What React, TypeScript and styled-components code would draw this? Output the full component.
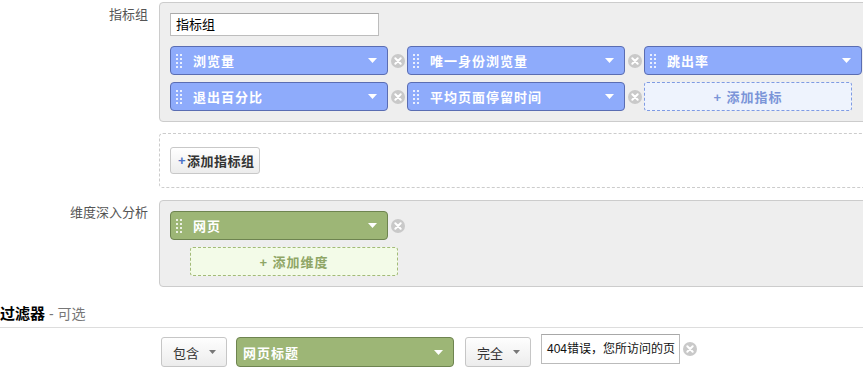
import React from 'react';
import styled, { createGlobalStyle } from 'styled-components';

const Global = createGlobalStyle`
  html, body { margin: 0; padding: 0; background: #fff; overflow: hidden; }
  body {
    font-family: "Liberation Sans", Arial, "Noto Sans CJK SC", sans-serif;
    font-size: 13px;
    color: #333;
  }
  * { box-sizing: border-box; }
`;

const Page = styled.div`
  width: 863px;
  height: 371px;
  overflow: hidden;
  padding-top: 2px;
`;

const Row = styled.div<{ $mb?: number }>`
  display: flex;
  align-items: flex-start;
  margin-bottom: ${(p) => p.$mb ?? 0}px;
`;

const Label = styled.div`
  flex: none;
  width: 148px;
  margin-right: 11px;
  text-align: right;
  color: #555;
  font-size: 13px;
  line-height: 16px;
  padding-top: 5px;
`;

const Panel = styled.div`
  flex: none;
  width: 740px;
  background: #eeeeee;
  border: 1px solid #cccccc;
  border-radius: 4px;
  padding: 10px;
`;

const NameInput = styled.div`
  width: 209px;
  height: 23px;
  background: #fff;
  border: 1px solid #bdbdbd;
  border-top-color: #a9a9a9;
  padding-left: 5px;
  font-size: 13px;
  line-height: 21px;
  color: #000;
  margin-bottom: 10px;
`;

const ChipGrid = styled.div`
  display: grid;
  grid-template-columns: repeat(3, 237px);
  row-gap: 7px;
`;

const Slot = styled.div<{ $indent?: number }>`
  display: flex;
  align-items: center;
  margin-left: ${(p) => p.$indent ?? 0}px;
`;

const Chip = styled.div<{ $tone: 'blue' | 'green'; $width?: number; $height?: number; $pl?: number }>`
  flex: none;
  display: flex;
  align-items: center;
  width: ${(p) => p.$width ?? 218}px;
  height: ${(p) => p.$height ?? 29}px;
  padding: 0 10px 0 ${(p) => p.$pl ?? 5}px;
  border: 1px solid ${(p) => (p.$tone === 'blue' ? '#5a6db2' : '#6e8450')};
  border-radius: 4px;
  background: ${(p) => (p.$tone === 'blue' ? '#8eabfb' : '#9db676')};
  color: #fff;
  font-weight: bold;
  font-size: 13px;
  letter-spacing: 1px;
  white-space: nowrap;
`;

const Handle = styled.span`
  position: relative;
  flex: none;
  width: 6px;
  height: 14px;
  margin-right: 11px;
  &::before {
    content: '';
    position: absolute;
    left: 0;
    top: 0;
    width: 2px;
    height: 2px;
    background: rgba(255, 255, 255, 0.8);
    box-shadow:
      4px 0 rgba(255, 255, 255, 0.8),
      0 4px rgba(255, 255, 255, 0.8),
      4px 4px rgba(255, 255, 255, 0.8),
      0 8px rgba(255, 255, 255, 0.8),
      4px 8px rgba(255, 255, 255, 0.8),
      0 12px rgba(255, 255, 255, 0.8),
      4px 12px rgba(255, 255, 255, 0.8);
  }
`;

const ChipText = styled.span`
  flex: 1;
`;

const Caret = ({ color = '#fff', w = 9, h = 5 }: { color?: string; w?: number; h?: number }) => (
  <svg width={w} height={h} viewBox={`0 0 ${w} ${h}`} style={{ flex: 'none', display: 'block' }}>
    <polygon points={`0,0 ${w},0 ${w / 2},${h}`} fill={color} />
  </svg>
);

const RemoveWrap = styled.span<{ $w?: number }>`
  flex: none;
  width: ${(p) => p.$w ?? 19}px;
  display: flex;
  justify-content: center;
  align-items: center;
`;

const Remove = ({ w }: { w?: number }) => (
  <RemoveWrap $w={w}>
    <svg width="14" height="14" viewBox="0 0 14 14">
      <circle cx="7" cy="7" r="7" fill="#c9c9c9" />
      <path d="M4.3 4.3 L9.7 9.7 M9.7 4.3 L4.3 9.7" stroke="#fff" strokeWidth="2" strokeLinecap="round" />
    </svg>
  </RemoveWrap>
);

const AddBox = styled.div<{ $tone: 'blue' | 'green'; $ml?: number; $mt?: number }>`
  width: 208px;
  height: 29px;
  margin-left: ${(p) => p.$ml ?? 0}px;
  margin-top: ${(p) => p.$mt ?? 0}px;
  display: flex;
  align-items: center;
  justify-content: center;
  border: 1px dashed ${(p) => (p.$tone === 'blue' ? '#7f9be3' : '#a3bb78')};
  border-radius: 3px;
  background: ${(p) => (p.$tone === 'blue' ? '#eef3fd' : '#f3fbe8')};
  color: ${(p) => (p.$tone === 'blue' ? '#7b95d8' : '#8fa666')};
  font-weight: bold;
  font-size: 13px;
  letter-spacing: 1px;
`;

const DashedBox = styled.div`
  flex: none;
  width: 740px;
  border: 1px dashed #cccccc;
  border-radius: 4px;
  padding: 13px 10px;
`;

const GroupButton = styled.div`
  width: 90px;
  height: 27px;
  display: flex;
  align-items: center;
  padding-left: 7px;
  border: 1px solid #c8c8c8;
  border-radius: 3px;
  background: linear-gradient(#ffffff, #ececec);
  color: #333;
  font-weight: bold;
  font-size: 13px;
  letter-spacing: 0.5px;
  white-space: nowrap;
`;

const Plus = styled.span`
  color: #4a72c8;
  margin-right: 1px;
`;

const FilterHeader = styled.div`
  padding-top: 17px;
  padding-bottom: 2px;
  line-height: 20px;
  border-bottom: 1px solid #dddddd;
`;

const FilterTitle = styled.span`
  font-size: 15px;
  font-weight: bold;
  color: #000;
`;

const FilterSub = styled.span`
  font-size: 14px;
  color: #777;
  margin-left: 4px;
`;

const FilterRow = styled.div`
  display: flex;
  align-items: flex-start;
  padding: 6px 0 0 161px;
`;

const SelectButton = styled.div<{ $mr: number }>`
  flex: none;
  width: 66px;
  height: 30px;
  margin-top: 3px;
  margin-right: ${(p) => p.$mr}px;
  display: flex;
  align-items: center;
  justify-content: space-between;
  padding: 0 10px 0 11px;
  border: 1px solid #c6c6c6;
  border-radius: 3px;
  background: linear-gradient(#fefefe, #ececec);
  color: #333;
  font-size: 13px;
`;

const FilterSelectWrap = styled.div`
  margin-top: 3px;
  margin-right: 11px;
`;

const FilterInput = styled.div`
  flex: none;
  width: 139px;
  height: 30px;
  border: 1px solid #bbbbbb;
  border-top-color: #a8a8a8;
  background: #fff;
  padding-left: 5px;
  font-size: 12px;
  line-height: 28px;
  color: #111;
  white-space: nowrap;
  overflow: hidden;
`;

const RemoveCenter = styled.div`
  margin-top: 8px;
  margin-left: 3px;
`;

const metrics = ['浏览量', '唯一身份浏览量', '跳出率', '退出百分比', '平均页面停留时间'];

export default function App() {
  return (
    <Page>
      <Global />
      <Row $mb={11}>
        <Label>指标组</Label>
        <Panel>
          <NameInput>指标组</NameInput>
          <ChipGrid>
            {metrics.map((m) => (
              <Slot key={m}>
                <Chip $tone="blue">
                  <Handle />
                  <ChipText>{m}</ChipText>
                  <Caret />
                </Chip>
                <Remove />
              </Slot>
            ))}
            <Slot>
              <AddBox $tone="blue">+ 添加指标</AddBox>
            </Slot>
          </ChipGrid>
        </Panel>
      </Row>
      <Row $mb={12}>
        <Label />
        <DashedBox>
          <GroupButton>
            <Plus>+</Plus>添加指标组
          </GroupButton>
        </DashedBox>
      </Row>
      <Row>
        <Label>维度深入分析</Label>
        <Panel>
          <Slot>
            <Chip $tone="green">
              <Handle />
              <ChipText>网页</ChipText>
              <Caret />
            </Chip>
            <Remove />
          </Slot>
          <AddBox $tone="green" $ml={20} $mt={7}>
            + 添加维度
          </AddBox>
        </Panel>
      </Row>
      <FilterHeader>
        <FilterTitle>过滤器</FilterTitle>
        <FilterSub>- 可选</FilterSub>
      </FilterHeader>
      <FilterRow>
        <SelectButton $mr={9}>
          <span>包含</span>
          <Caret color="#777" w={7} h={4} />
        </SelectButton>
        <FilterSelectWrap>
          <Chip $tone="green" $height={30} $pl={6}>
            <ChipText>网页标题</ChipText>
            <Caret />
          </Chip>
        </FilterSelectWrap>
        <SelectButton $mr={10}>
          <span>完全</span>
          <Caret color="#777" w={7} h={4} />
        </SelectButton>
        <FilterInput>404错误，您所访问的页</FilterInput>
        <RemoveCenter>
          <Remove w={14} />
        </RemoveCenter>
      </FilterRow>
    </Page>
  );
}
